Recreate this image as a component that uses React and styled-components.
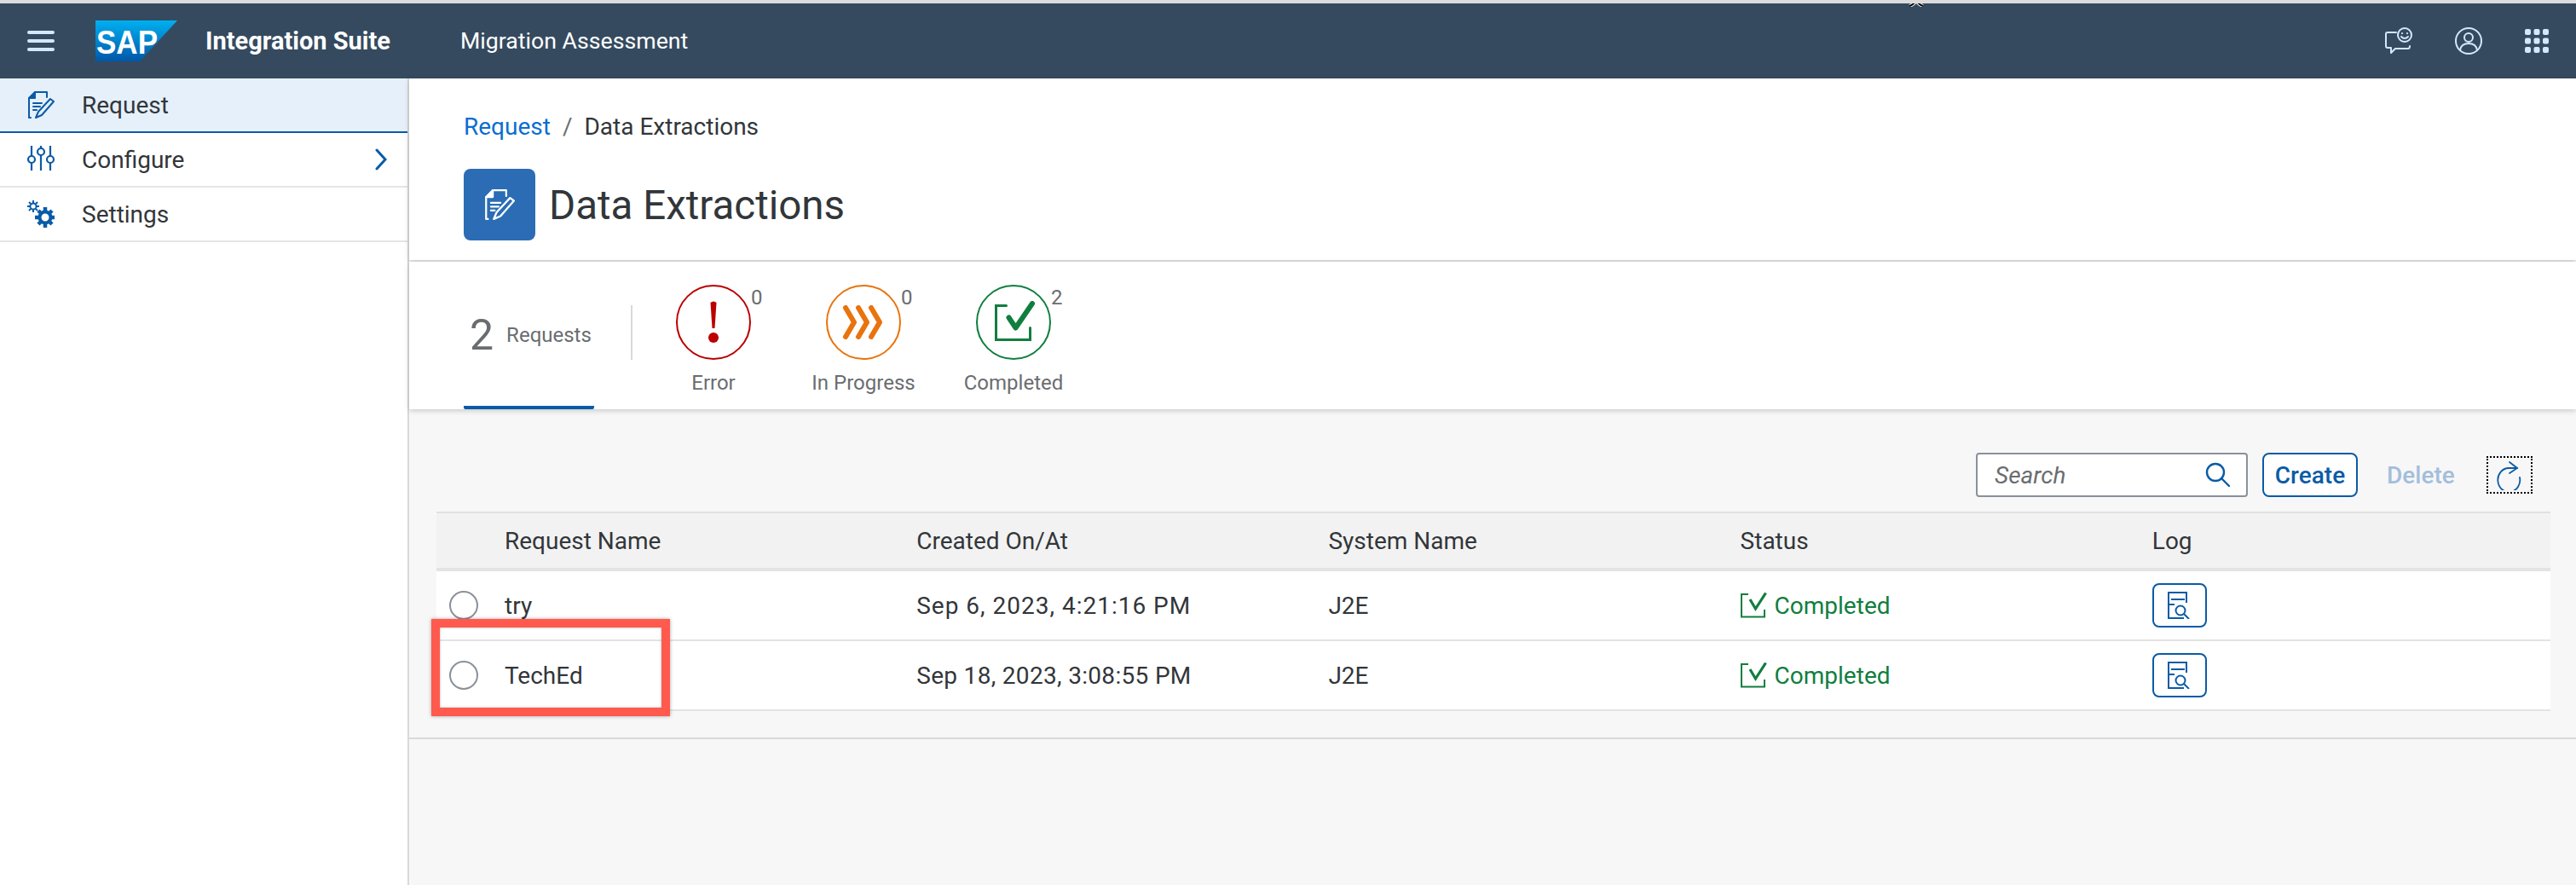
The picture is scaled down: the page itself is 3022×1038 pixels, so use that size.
import React from "react";
import styled, { createGlobalStyle } from "styled-components";

const GlobalStyle = createGlobalStyle`
  html, body { margin: 0; padding: 0; background: #f7f7f7; }
  * { box-sizing: border-box; }
  body { font-family: Roboto, "Noto Sans", sans-serif; color: #32363a; }
`;

const Page = styled.div`
  position: relative;
  width: 3022px;
  height: 1038px;
  overflow: hidden;
  display: flex;
  flex-direction: column;
  border-top: 4px solid #dcdcdc;
`;

const Cursor = styled.svg`
  position: absolute;
  left: 2238px;
  top: -4px;
`;

const ShellBar = styled.header`
  height: 88px;
  flex: none;
  background: #354a5f;
  display: flex;
  align-items: center;
  padding: 0 32px;
  color: #fff;
`;

const Burger = styled.div`
  width: 32px;
  height: 24px;
  display: flex;
  flex-direction: column;
  justify-content: space-between;
  margin-right: 48px;
  span { display: block; height: 4px; border-radius: 2px; background: #d1e8ff; }
`;

const ProductName = styled.span`
  font-size: 29px;
  font-weight: 700;
  margin-left: 33px;
  width: 299px;
`;

const AppName = styled.span`
  font-size: 26.7px;
  flex: 1;
`;

const ShellIcons = styled.div`
  display: flex;
  align-items: center;
  gap: 50px;
  svg { display: block; }
`;

const Body = styled.div`
  flex: 1;
  display: flex;
  min-height: 0;
`;

const Sidebar = styled.nav`
  width: 480px;
  flex: none;
  background: #fff;
  border-right: 2px solid #d9d9d9;
`;

const NavItem = styled.div`
  height: 64px;
  display: flex;
  align-items: center;
  padding: 0 24px 0 32px;
  gap: 32px;
  font-size: 28px;
  background: ${(p) => (p.$active ? "#e5f0fa" : "#fff")};
  border-bottom: 2px solid ${(p) => (p.$active ? "#0a5ba6" : "#e5e5e5")};
  span { flex: 1; }
  svg { flex: none; }
`;

const Main = styled.main`
  flex: 1;
  min-width: 0;
  display: flex;
  flex-direction: column;
`;

const PageHeader = styled.div`
  height: 213px;
  flex: none;
  background: #fff;
  padding: 38px 64px 0;
  box-shadow: 0 2px 6px rgba(0, 0, 0, 0.18);
  position: relative;
`;

const Breadcrumb = styled.div`
  font-size: 28px;
  line-height: 38px;
  display: flex;
  gap: 14px;
  a { color: #0a6ed1; }
  i { font-style: normal; color: #6a6d70; }
`;

const TitleRow = styled.div`
  display: flex;
  align-items: center;
  gap: 16px;
  margin-top: 30px;
`;

const TitleIcon = styled.div`
  width: 84px;
  height: 84px;
  border-radius: 8px;
  background: #2b6cb4;
  display: flex;
  align-items: center;
  justify-content: center;
`;

const Title = styled.h1`
  margin: 0;
  padding-top: 2px;
  font-size: 47.5px;
  font-weight: 400;
`;

const TabBar = styled.div`
  height: 173px;
  flex: none;
  margin-top: 2px;
  background: #fff;
  display: flex;
  padding-left: 64px;
  box-shadow: 0 2px 6px rgba(0, 0, 0, 0.18);
  position: relative;
`;

const TotalTab = styled.div`
  width: 153px;
  height: 173px;
  display: flex;
  align-items: center;
  padding: 3px 0 0 7px;
  gap: 15px;
  border-bottom: 4px solid #0a5ba6;
  border-radius: 0 0 2px 2px;
  color: #6a6d70;
  strong { font-size: 50px; font-weight: 400; }
  span { font-size: 24px; }
`;

const Separator = styled.div`
  width: 2px;
  height: 64px;
  margin: 51px 0 0 43px;
  background: #d9d9d9;
`;

const FilterList = styled.div`
  display: flex;
  margin-left: 7px;
`;

const FilterTab = styled.div`
  width: 176px;
  display: flex;
  flex-direction: column;
  align-items: center;
  padding-top: 27px;
  color: #6a6d70;
  font-size: 24px;
  label { margin-top: 13px; }
`;

const FilterCircle = styled.div`
  position: relative;
  width: 88px;
  height: 88px;
  border-radius: 50%;
  border: 2px solid ${(p) => p.$color};
  display: flex;
  align-items: center;
  justify-content: center;
  sup {
    position: absolute;
    top: 0;
    left: 86px;
    font-size: 24px;
    line-height: 26px;
  }
`;

const Content = styled.section`
  flex: none;
  height: 387px;
  padding: 0 30px 0 32px;
  border-bottom: 2px solid #d9d9d9;
`;

const Toolbar = styled.div`
  height: 120px;
  display: flex;
  align-items: center;
  justify-content: flex-end;
  padding: 34px 21px 0 0;
`;

const SearchBox = styled.div`
  width: 319px;
  height: 52px;
  background: #fff;
  border: 2px solid #89919a;
  border-radius: 4px;
  display: flex;
  align-items: center;
  justify-content: space-between;
  padding: 0 18px 0 20px;
  font-size: 28px;
  font-style: italic;
  color: #6a6d70;
`;

const GhostButton = styled.div`
  width: 112px;
  height: 52px;
  margin-left: 17px;
  background: #fff;
  border: 2px solid #0a5ba6;
  border-radius: 8px;
  display: flex;
  align-items: center;
  justify-content: center;
  color: #0a5ba6;
  font-size: 28px;
  font-weight: 500;
`;

const DisabledButton = styled.div`
  width: 80px;
  margin-left: 34px;
  color: #a3bedb;
  font-size: 28px;
  font-weight: 500;
`;

const RefreshButton = styled.div`
  width: 54px;
  height: 44px;
  margin-left: 37px;
  border: 2px dotted #000;
  display: flex;
  align-items: center;
  justify-content: center;
`;

const Table = styled.div`
  position: relative;
`;

const Row = styled.div`
  display: grid;
  grid-template-columns: 64px repeat(5, 1fr);
  align-items: center;
  height: ${(p) => (p.$head ? "70px" : "82px")};
  background: ${(p) => (p.$head ? "#f2f2f2" : "#fff")};
  border-top: ${(p) => (p.$head ? "2px solid #e0e0e0" : "none")};
  border-bottom: ${(p) => (p.$head ? "4px" : "2px")} solid #e3e3e3;
  font-size: 28px;
`;

const Cell = styled.div`
  padding-left: 16px;
  display: flex;
  align-items: center;
`;

const DateCell = styled(Cell)`
  letter-spacing: ${(p) => p.$tracking}px;
`;

const Radio = styled.div`
  width: 34px;
  height: 34px;
  margin-left: 15px;
  border-radius: 50%;
  border: 2px solid #89919a;
  background: #fff;
`;

const Status = styled.span`
  display: flex;
  align-items: center;
  gap: 8px;
  color: #107e3e;
`;

const LogButton = styled.div`
  width: 64px;
  height: 52px;
  border: 2px solid #0a5ba6;
  border-radius: 8px;
  display: flex;
  align-items: center;
  justify-content: center;
`;

const Callout = styled.div`
  position: absolute;
  left: -6px;
  top: 126px;
  width: 280px;
  height: 114px;
  border: 10px solid #ff5a4d;
  box-shadow: 0 0 4px rgba(0, 0, 0, 0.35), inset 0 0 3px rgba(0, 0, 0, 0.3);
`;

const blue = "#0a5ba6";

function RequestIcon({ color = blue, size = 32 }) {
  return (
    <svg width={size} height={size} viewBox="0 0 32 32" fill="none" stroke={color} strokeWidth="2" strokeLinecap="round" strokeLinejoin="round">
      <path d="M4 31 H2 V8 L9 1 H23 V7" />
      <path d="M9 1 V8 H2" fill={color} />
      <path d="M7 14 H17 M7 18 H15 M7 22 H11" />
      <path d="M10 31 L13 24 L27 9 L31 12 L17 28 Z" />
    </svg>
  );
}

function SlidersIcon() {
  return (
    <svg width="32" height="32" viewBox="0 0 32 32" fill="none" stroke={blue} strokeWidth="2.2">
      <path d="M5 0 V12 M5 20 V29 M16 0 V3 M16 11 V29 M27 0 V12 M27 20 V29" />
      <circle cx="5" cy="16" r="4" />
      <circle cx="16" cy="7" r="4" />
      <circle cx="27" cy="16" r="4" />
    </svg>
  );
}

function GearsIcon() {
  return (
    <svg width="32" height="32" viewBox="0 0 32 32" fill="none" stroke={blue}>
      <circle cx="7" cy="7" r="3.6" strokeWidth="2" />
      <path d="M7 0 V3 M7 11 V14 M0 7 H3 M11 7 H14 M2 2 L4 4 M10 10 L12 12 M2 12 L4 10 M10 4 L12 2" strokeWidth="2" />
      <circle cx="21" cy="20" r="6.5" strokeWidth="4" />
      <path d="M21 8 V12 M21 28 V32 M9 20 H13 M29 20 H32 M13 12 L15.5 14.5 M26.5 25.5 L29 28 M13 28 L15.5 25.5 M26.5 14.5 L29 12" strokeWidth="4.5" />
    </svg>
  );
}

function CheckBoxIcon() {
  return (
    <svg width="32" height="30" viewBox="0 0 32 30" fill="none" stroke="#107e3e" strokeWidth="2">
      <path d="M9 2 H1 V28.5 H28 V20" />
      <path d="M11 8 L17.5 19 L29.5 0.5" strokeWidth="3.2" />
    </svg>
  );
}

function LogIcon() {
  return (
    <svg width="28" height="32" viewBox="0 0 28 32" fill="none" stroke={blue} strokeWidth="2">
      <path d="M22 13 V1 H1 V31 H19" />
      <path d="M4 9 H20 M1 15 H8" />
      <circle cx="15" cy="22" r="5.5" />
      <path d="M19 26 L25 32" />
    </svg>
  );
}

const SapLogo = () => (
  <svg width="96" height="48" viewBox="0 0 96 48">
    <defs>
      <linearGradient id="sapGrad" x1="0" y1="0" x2="0" y2="1">
        <stop offset="0" stopColor="#00b0f0" />
        <stop offset="1" stopColor="#0057a8" />
      </linearGradient>
    </defs>
    <polygon points="0,0 96,0 52,48 0,48" fill="url(#sapGrad)" />
    <text x="1" y="39" fontFamily="Liberation Sans" fontWeight="700" fontSize="38" fill="#fff" textLength="72" lengthAdjust="spacingAndGlyphs">SAP</text>
  </svg>
);

const rows = [
  { name: "try", created: "Sep 6, 2023, 4:21:16 PM", tracking: 1 },
  { name: "TechEd", created: "Sep 18, 2023, 3:08:55 PM", tracking: 0.32 },
];

export default function App() {
  return (
    <>
      <GlobalStyle />
      <Page>
        <Cursor width="20" height="8" viewBox="0 0 20 8">
          <path d="M2 7 Q6 6 10 1 Q14 6 18 7" fill="none" stroke="#fff" strokeWidth="4" />
          <path d="M2 7 Q6 6 10 1 Q14 6 18 7" fill="none" stroke="#000" strokeWidth="2" />
        </Cursor>
        <ShellBar>
          <Burger><span /><span /><span /></Burger>
          <SapLogo />
          <ProductName>Integration Suite</ProductName>
          <AppName>Migration Assessment</AppName>
          <ShellIcons>
            <svg width="32" height="32" viewBox="0 0 32 32" fill="none" stroke="#d1e8ff" strokeWidth="2" strokeLinecap="round" strokeLinejoin="round">
              <path d="M13 6 H3 Q1 6 1 8 V22 Q1 24 3 24 H7 V30 L12 25 H27 Q29 25 29 22" />
              <circle cx="23" cy="9" r="8" />
              <path d="M19 11 Q23 15 27 11 M20 7 V7.2 M26 7 V7.2" />
            </svg>
            <svg width="32" height="32" viewBox="0 0 32 32" fill="none" stroke="#d1e8ff" strokeWidth="2">
              <circle cx="16" cy="16" r="15" />
              <circle cx="16" cy="12" r="5" />
              <path d="M6 27 Q7 19 16 19 Q25 19 26 27" />
            </svg>
            <svg width="28" height="28" viewBox="0 0 28 28" fill="#d1e8ff">
              {[0, 10.5, 21].flatMap((y) =>
                [0, 10.5, 21].map((x) => <rect key={`${x}-${y}`} x={x} y={y} width="7" height="7" rx="2" />)
              )}
            </svg>
          </ShellIcons>
        </ShellBar>
        <Body>
          <Sidebar>
            <NavItem $active><RequestIcon /><span>Request</span></NavItem>
            <NavItem>
              <SlidersIcon />
              <span>Configure</span>
              <svg width="14" height="26" viewBox="0 0 14 26" fill="none" stroke={blue} strokeWidth="3" strokeLinecap="round">
                <path d="M2 2 L12 13 L2 24" />
              </svg>
            </NavItem>
            <NavItem><GearsIcon /><span>Settings</span></NavItem>
          </Sidebar>
          <Main>
            <PageHeader>
              <Breadcrumb><a>Request</a><i>/</i><span>Data Extractions</span></Breadcrumb>
              <TitleRow>
                <TitleIcon><RequestIcon color="#fff" size={36} /></TitleIcon>
                <Title>Data Extractions</Title>
              </TitleRow>
            </PageHeader>
            <TabBar>
              <TotalTab><strong>2</strong><span>Requests</span></TotalTab>
              <Separator />
              <FilterList>
                <FilterTab>
                  <FilterCircle $color="#bb0000">
                    <svg width="14" height="50" viewBox="0 0 14 50" fill="#bb0000">
                      <path d="M3.5 2 Q7 -1 10.5 2 L8.5 32 H5.5 Z" />
                      <circle cx="7" cy="43" r="6" />
                    </svg>
                    <sup>0</sup>
                  </FilterCircle>
                  <label>Error</label>
                </FilterTab>
                <FilterTab>
                  <FilterCircle $color="#e9730c">
                    <svg width="52" height="40" viewBox="0 0 52 40" fill="none" stroke="#e9730c" strokeWidth="6" strokeLinecap="round" strokeLinejoin="round">
                      <path d="M5 3 L15 20 L5 37 M20 3 L30 20 L20 37 M35 3 L45 20 L35 37" />
                    </svg>
                    <sup>0</sup>
                  </FilterCircle>
                  <label>In Progress</label>
                </FilterTab>
                <FilterTab>
                  <FilterCircle $color="#107e3e">
                    <svg width="50" height="50" viewBox="0 0 50 50" fill="none" stroke="#107e3e" strokeWidth="3">
                      <path d="M16.5 5.5 H4.5 V45.5 H44.5 V31.5" strokeLinecap="round" />
                      <path d="M19.5 19.5 L27.5 31.5 L47 3" strokeWidth="6" strokeLinecap="round" strokeLinejoin="round" />
                    </svg>
                    <sup>2</sup>
                  </FilterCircle>
                  <label>Completed</label>
                </FilterTab>
              </FilterList>
            </TabBar>
            <Content>
              <Toolbar>
                <SearchBox>
                  Search
                  <svg width="30" height="30" viewBox="0 0 30 30" fill="none" stroke={blue} strokeWidth="2.4" strokeLinecap="round">
                    <circle cx="12" cy="12" r="10" />
                    <path d="M19 19 L28 28" />
                  </svg>
                </SearchBox>
                <GhostButton>Create</GhostButton>
                <DisabledButton>Delete</DisabledButton>
                <RefreshButton>
                  <svg width="30" height="35" viewBox="0 0 30 35" fill="none" stroke={blue} strokeWidth="1.8" strokeLinecap="round">
                    <path d="M24 9 H14 A13 14 0 1 0 27 20" />
                    <path d="M15 2 L24 9 L15 15" />
                  </svg>
                </RefreshButton>
              </Toolbar>
              <Table>
                <Row $head>
                  <Cell />
                  <Cell>Request Name</Cell>
                  <Cell>Created On/At</Cell>
                  <Cell>System Name</Cell>
                  <Cell>Status</Cell>
                  <Cell>Log</Cell>
                </Row>
                {rows.map((r) => (
                  <Row key={r.name}>
                    <Radio />
                    <Cell>{r.name}</Cell>
                    <DateCell $tracking={r.tracking}>{r.created}</DateCell>
                    <Cell>J2E</Cell>
                    <Cell><Status><CheckBoxIcon />Completed</Status></Cell>
                    <Cell><LogButton><LogIcon /></LogButton></Cell>
                  </Row>
                ))}
                <Callout />
              </Table>
            </Content>
          </Main>
        </Body>
      </Page>
    </>
  );
}
